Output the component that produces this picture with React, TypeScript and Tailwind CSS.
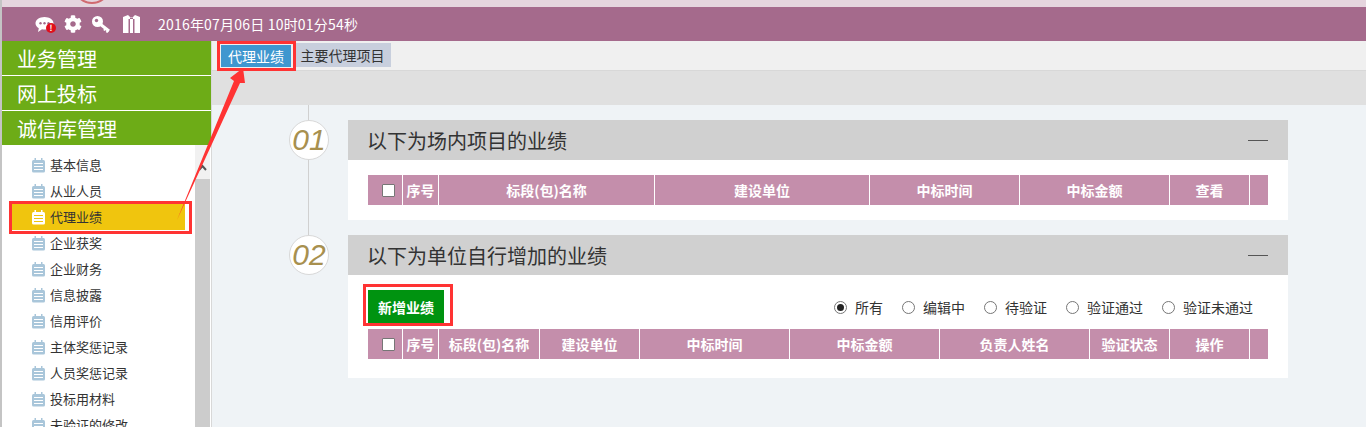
import { FaCog } from "react-icons/fa";

const SIDE_ITEMS = [
  "基本信息",
  "从业人员",
  "代理业绩",
  "企业获奖",
  "企业财务",
  "信息披露",
  "信用评价",
  "主体奖惩记录",
  "人员奖惩记录",
  "投标用材料",
  "未验证的修改",
];

const TABLE_ONE = [
  { w: "w-[215px]", label: "标段(包)名称" },
  { w: "w-[214px]", label: "建设单位" },
  { w: "w-[149px]", label: "中标时间" },
  { w: "w-[149px]", label: "中标金额" },
  { w: "w-[79px]", label: "查看" },
];

const TABLE_TWO = [
  { w: "w-[100px]", label: "标段(包)名称" },
  { w: "w-[99px]", label: "建设单位" },
  { w: "w-[149px]", label: "中标时间" },
  { w: "w-[149px]", label: "中标金额" },
  { w: "w-[149px]", label: "负责人姓名" },
  { w: "w-[79px]", label: "验证状态" },
  { w: "w-[79px]", label: "操作" },
];

const RADIOS = [
  { label: "所有", w: "w-[68px]" },
  { label: "编辑中", w: "w-[82px]" },
  { label: "待验证", w: "w-[82px]" },
  { label: "验证通过", w: "w-[96px]" },
  { label: "验证未通过", w: "w-[91px]" },
];

function NoteIcon({ active }: { active: boolean }) {
  const color = active ? "#ffffff" : "#a9c6da";
  const line = active ? "#f0c50e" : "#ffffff";
  return (
    <svg width="15" height="15" viewBox="0 0 15 15" className="shrink-0">
      <rect x="1" y="2" width="13" height="12.500" rx="1.500" fill={color} />
      <rect x="3.500" y="0" width="1.500" height="4" fill={color} />
      <rect x="10" y="0" width="1.500" height="4" fill={color} />
      <rect x="3" y="5" width="9" height="1" fill={line} />
      <rect x="3" y="8" width="9" height="1" fill={line} />
      <rect x="3" y="11" width="9" height="1" fill={line} />
    </svg>
  );
}

function HeadRow({ cols }: { cols: { w: string; label: string }[] }) {
  return (
    <div className="flex h-[30px] w-[900px] gap-px bg-white text-[14px] font-bold text-white">
      <div className="flex w-[34px] items-center justify-end bg-[#c48eab] pr-[7px]">
        <span className="h-[13px] w-[13px] rounded-[1px] border border-[#767676] bg-white" />
      </div>
      <div className="flex w-[35px] items-center justify-center bg-[#c48eab]">序号</div>
      {cols.map((c) => (
        <div key={c.label} className={`flex items-center justify-center bg-[#c48eab] ${c.w}`}>
          {c.label}
        </div>
      ))}
      <div className="flex-1 bg-[#c48eab]" />
    </div>
  );
}

function Badge({ num }: { num: string }) {
  return (
    <div className="z-10 flex h-10 w-10 items-center justify-center rounded-full border border-[#d8d8d8] bg-white font-['Liberation_Sans',sans-serif] text-[30px] italic leading-none text-[#a8904f]">
      {num}
    </div>
  );
}

function CardHead({ title }: { title: string }) {
  return (
    <div className="flex h-10 items-center justify-between bg-[#d0d0d0] pl-[19px] pr-5 pt-px text-[20px] text-[#333]">
      <span>{title}</span>
      <span className="h-px w-5 bg-[#555]" />
    </div>
  );
}

export default function App() {
  return (
    <div className="relative h-[427px] w-[1366px] overflow-hidden border-l-2 border-[#c4c4c4] bg-[#eff3f6] font-['Noto_Sans_CJK_SC',sans-serif]">
      {/* top strip with cut off logo */}
      <div className="relative h-[7px] overflow-hidden bg-[#e5d5de]">
        <div className="absolute left-[71px] top-[-34px] h-[38px] w-[38px] rounded-full border-2 border-[#d06a70]" />
      </div>

      {/* Header */}
      <header className="flex h-[34px] items-center bg-[#a56a8c] pl-[33px] text-[14px] text-white">
        <div className="relative h-[17px] w-[20px]">
          <svg width="20" height="17" viewBox="0 0 20 17">
            <path d="M9.500 1c5 0 9 2.800 9 6.300s-4 6.300-9 6.300c-.9 0-1.700-.1-2.500-.3L3 16l.8-3.800C1.700 11.100.5 9.300.5 7.300.5 3.800 4.500 1 9.500 1z" fill="#fff" />
            <circle cx="5.500" cy="7.300" r="1.200" fill="#a56a8c" />
            <circle cx="9.500" cy="7.300" r="1.200" fill="#a56a8c" />
            <circle cx="13.500" cy="7.300" r="1.200" fill="#a56a8c" />
          </svg>
          <span className="absolute left-[11px] top-[7px] flex h-[10px] w-[10px] items-center justify-center rounded-full bg-[#e0101c] text-[8px] font-bold leading-none text-white">!</span>
        </div>
        <FaCog className="ml-[9px] text-[18px]" />
        <svg width="19" height="17" viewBox="0 0 19 17" className="ml-[10px]">
          <circle cx="5.500" cy="5.500" r="5.500" fill="#fff" />
          <circle cx="4.500" cy="4.500" r="1.700" fill="#a56a8c" />
          <path d="M8 8l9 7" stroke="#fff" strokeWidth="3" />
          <path d="M13.500 12.500l-1.500 2M16 14.500l-1.500 2" stroke="#fff" strokeWidth="2" />
        </svg>
        <svg width="19" height="18" viewBox="0 0 19 18" className="ml-[11px]">
          <path d="M1 2 6 0l2 2h3l2-2 5 2v16H1z" fill="#fff" />
          <rect x="6.500" y="4" width="1.500" height="14" fill="#a56a8c" />
          <rect x="11" y="4" width="1.500" height="14" fill="#a56a8c" />
          <rect x="8" y="2.500" width="3" height="1.500" fill="#a56a8c" />
        </svg>
        <span className="ml-[17px] tracking-[0.2px]">2016年07月06日 10时01分54秒</span>
      </header>

      <div className="flex">
        {/* Sidebar */}
        <aside className="h-[386px] w-[209px] shrink-0 overflow-hidden bg-white">
          <div className="flex flex-col gap-px bg-white text-[20px] text-white">
            {["业务管理", "网上投标", "诚信库管理"].map((t) => (
              <div key={t} className="flex h-[34px] items-center bg-[#6dac17] pl-[15px] pt-px">
                {t}
              </div>
            ))}
          </div>
          <div className="flex">
            <ul className="w-[193px] pt-[7px] text-[13px] text-[#333]">
              {SIDE_ITEMS.map((t) => {
                const active = t === "代理业绩";
                return (
                  <li
                    key={t}
                    className={`flex h-[26px] items-center gap-[4px] ${active ? "ml-[10px] w-[173px] bg-[#f0c50e] pl-[19px]" : "pl-[29px]"}`}
                  >
                    <NoteIcon active={active} />
                    {t}
                  </li>
                );
              })}
            </ul>
            <div className="w-[15px] bg-[#f1f1f1]">
              <div className="flex h-[34px] items-center justify-center text-[#555]">
                <svg width="9" height="7" viewBox="0 0 9 7" className="mt-[10px]">
                  <path d="M1 6l3.500-4L8 6" fill="none" stroke="#555" strokeWidth="2" />
                </svg>
              </div>
              <div className="h-[300px] bg-[#cccccc]" />
            </div>
          </div>
        </aside>

        {/* Main */}
        <main className="flex-1 border-l border-[#d8d8d8]">
          <div className="h-[30px] border-b border-[#d8d8d8] bg-[#f0f0f0] pl-[9px] pt-[2px]">
            <div className="flex items-end gap-[5px] text-[14px]">
              <span className="flex h-[22px] w-[70px] items-center justify-center bg-[#3f97cf] text-white">代理业绩</span>
              <span className="flex h-[24px] w-[95px] items-center justify-center bg-[#c8cfdd] pr-[2px] text-[#333]">主要代理项目</span>
            </div>
          </div>
          <div className="h-[34px] bg-[#e0e0e0]" />

          <div className="relative pl-[77px] pt-[15px]">
            {/* timeline */}
            <div className="absolute left-[96px] top-0 h-[150px] w-px bg-[#d0d0d0]" />
            <div className="flex gap-[19px]">
              <Badge num="01" />
              <section className="w-[940px] bg-white">
                <CardHead title="以下为场内项目的业绩" />
                <div className="p-[15px] px-5">
                  <HeadRow cols={TABLE_ONE} />
                </div>
              </section>
            </div>
            <div className="mt-[15px] flex gap-[19px]">
              <Badge num="02" />
              <section className="w-[940px] bg-white">
                <CardHead title="以下为单位自行增加的业绩" />
                <div className="px-5 pb-[19px] pt-[15px]">
                  <div className="flex items-center justify-between">
                    <button className="flex h-[34px] w-[76px] items-center justify-center bg-[#009310] text-[14px] font-bold text-white">
                      新增业绩
                    </button>
                    <div className="flex pr-[15px] text-[14px] text-[#333]">
                      {RADIOS.map((r, i) => (
                        <label key={r.label} className={`flex items-center gap-[8px] ${r.w}`}>
                          <span className="flex h-[13px] w-[13px] shrink-0 items-center justify-center rounded-full border border-[#767676] bg-white">
                            {i === 0 && <span className="h-[7px] w-[7px] rounded-full bg-[#222]" />}
                          </span>
                          {r.label}
                        </label>
                      ))}
                    </div>
                  </div>
                  <div className="mt-[5px]">
                    <HeadRow cols={TABLE_TWO} />
                  </div>
                </div>
              </section>
            </div>
          </div>
        </main>
      </div>

      {/* red annotations over the page */}
      <div className="absolute left-[7px] top-[201px] h-[33px] w-[183px] border-[3px] border-[#ff3333]" />
      <div className="absolute left-[215px] top-[41px] h-[30px] w-[79px] border-[3px] border-[#ff3333]" />
      <div className="absolute left-[361px] top-[284px] h-[42px] w-[90px] border-[3px] border-[#ff3333]" />
      <svg width="120" height="170" viewBox="0 0 120 170" className="absolute left-[148px] top-[60px]">
        <path d="M27 160 L84 21 L80 18 L93 8 L95 23 L90 23 Z" fill="#ff3333" />
      </svg>
    </div>
  );
}
